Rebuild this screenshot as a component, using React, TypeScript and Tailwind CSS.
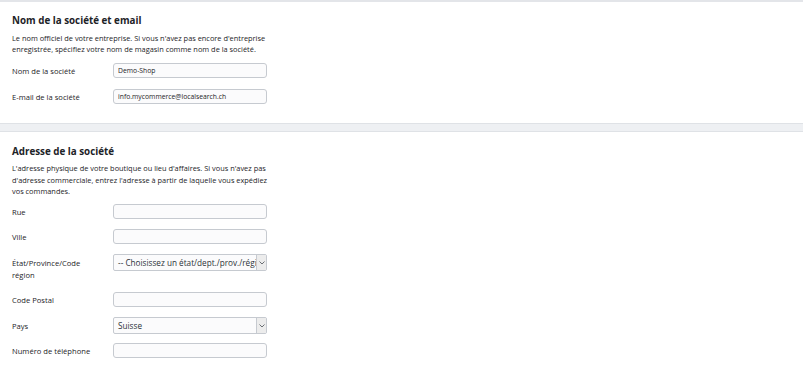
import React from "react"

function Field({ label, value = "" }: { label: string; value?: string }) {
  return (
    <div className="flex items-start">
      <div className="w-[101px] shrink-0 pt-[1.5px] text-[7.6px] font-medium leading-[12px]">{label}</div>
      <input
        readOnly
        value={value}
        className="h-[15px] w-[154px] rounded-[3px] border border-[#c6cad0] bg-[#fbfbfc] px-[4px] text-[6.8px] text-[#1d2327] outline-none"
      />
    </div>
  )
}

function SelectField({ label, value }: { label: string; value: string }) {
  return (
    <div className="flex items-start">
      <div className="w-[101px] shrink-0 pr-4 pt-[2.5px] text-[7.6px] font-medium leading-[12px]">{label}</div>
      <div className="flex h-[17px] w-[154px] items-stretch overflow-hidden rounded-[2px] border border-[#c6cad0] bg-[#fbfbfc]">
        <div className="flex-1 overflow-hidden whitespace-nowrap px-[4px] text-[8.2px] leading-[15px] text-[#2c3338]">{value}</div>
        <div className="flex w-[10px] items-center justify-center border-l border-[#c6cad0] bg-[#ececec]">
          <svg width="6" height="4" viewBox="0 0 6 4">
            <path d="M0.5 0.5 L3 3 L5.5 0.5" fill="none" stroke="#6b6f74" strokeWidth="1" />
          </svg>
        </div>
      </div>
    </div>
  )
}

export default function App() {
  return (
    <div className="h-[379px] w-[803px] overflow-hidden bg-[#eef0f3] text-[#1d2327]" style={{ fontFamily: '"Open Sans", "Noto Sans", sans-serif' }}>
      <div className="h-[2px] bg-[#e3e5e9]" />
      <div className="h-[122px] border-b border-[#dfe2e6] bg-white px-3 pt-[11px]">
        <h2 className="text-[9.8px] font-bold leading-[16px]">Nom de la société et email</h2>
        <p className="mt-[4px] whitespace-nowrap text-[7.4px] leading-[11px] text-[#1d2327]">
          Le nom officiel de votre entreprise. Si vous n'avez pas encore d'entreprise
          <br />
          enregistrée, spécifiez votre nom de magasin comme nom de la société.
        </p>
        <div className="mt-[8px] flex flex-col gap-[11px]">
          <Field label="Nom de la société" value="Demo-Shop" />
          <Field label="E-mail de la société" value="info.mycommerce@localsearch.ch" />
        </div>
      </div>
      <div className="h-[7px]" />
      <div className="h-[250px] border-t border-[#dfe2e6] bg-white px-3 pt-[12px]">
        <h2 className="text-[9.8px] font-bold leading-[16px]">Adresse de la société</h2>
        <p className="mt-[3px] whitespace-nowrap text-[7.4px] leading-[11.5px] text-[#1d2327]">
          L'adresse physique de votre boutique ou lieu d'affaires. Si vous n'avez pas
          <br />
          d'adresse commerciale, entrez l'adresse à partir de laquelle vous expédiez
          <br />
          vos commandes.
        </p>
        <div className="mt-[6.5px] flex flex-col gap-[10px]">
          <Field label="Rue" />
          <Field label="Ville" />
          <div className="h-[28px]">
            <SelectField label="État/Province/Code région" value="-- Choisissez un état/dept./prov./région --" />
          </div>
          <Field label="Code Postal" />
          <div className="-mb-[1px]">
            <SelectField label="Pays" value="Suisse" />
          </div>
          <Field label="Numéro de téléphone" />
        </div>
      </div>
    </div>
  )
}
